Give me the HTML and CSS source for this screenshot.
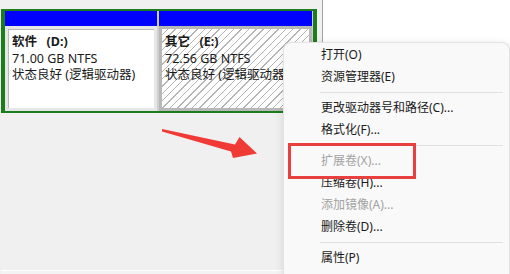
FILE: index.html
```html
<!DOCTYPE html>
<html lang="zh-CN">
<head>
<meta charset="utf-8">
<title>磁盘管理</title>
<link rel="stylesheet" href="styles.css">
</head>
<body>
<div class="screen">
  <div class="disks">
    <div class="group">
      <div class="vol vol-d">
        <div class="bar"></div>
        <div class="body">
          <div class="line name">软件 &ensp;(D:)</div>
          <div class="line">71.00 GB NTFS</div>
          <div class="line">状态良好 (逻辑驱动器)</div>
        </div>
      </div>
      <div class="vol vol-e">
        <div class="bar"></div>
        <div class="body">
          <div class="line name">其它 &ensp;(E:)</div>
          <div class="line">72.56 GB NTFS</div>
          <div class="line">状态良好 (逻辑驱动器)</div>
        </div>
      </div>
    </div>
    <div class="fill"></div>
    <div class="rule"></div>
  </div>
  <div class="side"></div>
</div>

<svg class="arrow" width="110" height="40" viewBox="155 125 110 40" xmlns="http://www.w3.org/2000/svg">
  <polygon points="162,129 235,144.5 239.5,137 257,153.5 233,158 231,151.5 162,131.5" fill="#f03a35"/>
</svg>

<div class="menu">
  <div class="item">打开(O)</div>
  <div class="item">资源管理器(E)</div>
  <div class="sep"></div>
  <div class="item">更改驱动器号和路径(C)...</div>
  <div class="item">格式化(F)...</div>
  <div class="sep"></div>
  <div class="item disabled">扩展卷(X)...</div>
  <div class="item">压缩卷(H)...</div>
  <div class="item disabled">添加镜像(A)...</div>
  <div class="item">删除卷(D)...</div>
  <div class="sep"></div>
  <div class="item">属性(P)</div>
</div>

<div class="highlight"></div>
</body>
</html>
```

FILE: styles.css
```css
* { box-sizing: border-box; }

html, body {
  margin: 0;
  padding: 0;
  width: 510px;
  height: 274px;
  overflow: hidden;
}

body {
  position: relative;
  background: #f0f0f0;
  font-family: "Noto Sans", "Noto Sans CJK SC", sans-serif;
  font-size: 12px;
  color: #1a1a1a;
}

.screen {
  display: flex;
  height: 274px;
}

.disks {
  width: 323px;
  display: flex;
  flex-direction: column;
  padding: 9px 0 0 1px;
  border-right: 1px solid #a3a3a3;
}

.group {
  width: 316px;
  height: 104px;
  display: flex;
  gap: 2px;
  padding-right: 1px;
  border-style: solid;
  border-color: #1b7d1b;
  border-width: 2px 4px 2px 4px;
  background: #cfcfcf;
}

.vol {
  display: flex;
  flex-direction: column;
}

.vol-d { width: 152px; }
.vol-e { width: 153px; }

.bar {
  height: 15px;
  background: #0000ff;
}

.body {
  flex: 1;
  padding: 5px 0 0 4px;
  font-size: 12.5px;
  line-height: 16.5px;
  overflow: hidden;
}

.line {
  white-space: pre;
}

.vol-d .body {
  background: #ffffff;
  border: 3px solid #e6e6e6;
  box-shadow: inset 1px 1px 0 #b9b9b9;
}

.vol-e .body {
  border: 3px solid #b8b8b8;
  padding-left: 3px;
  background-color: #ffffff;
  background-image: repeating-linear-gradient(
    -45deg,
    #ffffff 0px,
    #ffffff 4.2px,
    #b5b5b5 4.2px,
    #b5b5b5 5.2px
  );
}

.line.name { font-weight: bold; }

.fill { flex: 1; }

.rule {
  height: 4px;
  border-top: 1px solid #ffffff;
  background: #f3f3f3;
}

.side {
  flex: 1;
  background: #ffffff;
}

.arrow {
  position: absolute;
  left: 155px;
  top: 125px;
}

.menu {
  position: absolute;
  left: 283px;
  top: 42px;
  right: 0;
  bottom: 0;
  padding-top: 1px;
  background: #f9f9f9;
  border: 1px solid #e3e3e3;
  border-bottom: none;
  border-radius: 8px 8px 0 0;
  box-shadow: 0 2px 8px rgba(0, 0, 0, 0.12);
}

.item {
  height: 22px;
  line-height: 22px;
  padding-left: 37px;
  white-space: nowrap;
  color: #1a1a1a;
}

.item.disabled { color: #a2a2a2; }

.sep {
  height: 9px;
  margin: 0 6px 0 36px;
  position: relative;
}

.sep::after {
  content: "";
  position: absolute;
  left: 0;
  right: 0;
  top: 4px;
  height: 1px;
  background: #e1e1e1;
}

.highlight {
  position: absolute;
  left: 288px;
  top: 143px;
  width: 128px;
  height: 36px;
  border: 3px solid #e8403f;
}
```
